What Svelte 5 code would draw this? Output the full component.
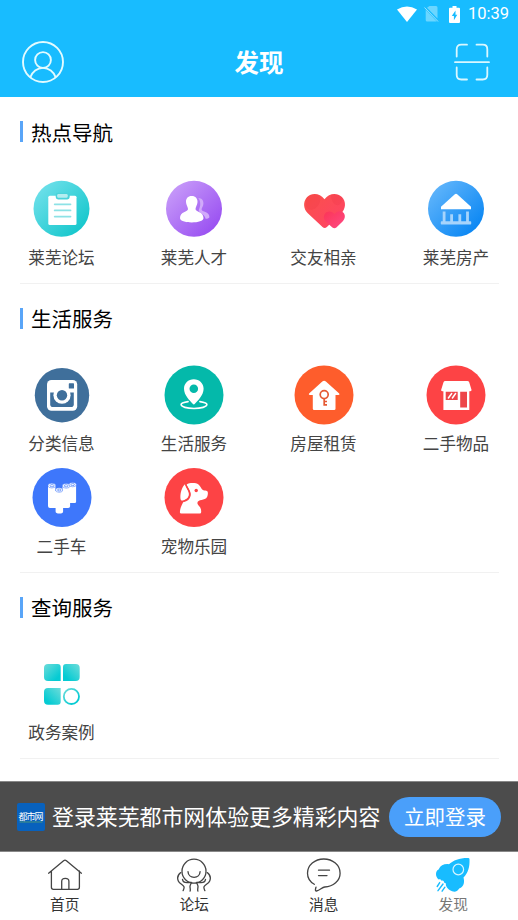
<script lang="ts">
  interface Item {
    icon: string;
    label: string;
  }

  interface Section {
    title: string;
    items: Item[];
  }

  const sections: Section[] = [
    {
      title: '热点导航',
      items: [
        { icon: 'clipboard', label: '莱芜论坛' },
        { icon: 'people', label: '莱芜人才' },
        { icon: 'heart', label: '交友相亲' },
        { icon: 'estate', label: '莱芜房产' }
      ]
    },
    {
      title: '生活服务',
      items: [
        { icon: 'camera', label: '分类信息' },
        { icon: 'pin', label: '生活服务' },
        { icon: 'rent', label: '房屋租赁' },
        { icon: 'shop', label: '二手物品' },
        { icon: 'rolls', label: '二手车' },
        { icon: 'dog', label: '宠物乐园' }
      ]
    },
    {
      title: '查询服务',
      items: [{ icon: 'blocks', label: '政务案例' }]
    }
  ];

  const tabs: Item[] = [
    { icon: 'home', label: '首页' },
    { icon: 'forum', label: '论坛' },
    { icon: 'message', label: '消息' },
    { icon: 'discover', label: '发现' }
  ];

  let active: string = $state('discover');
</script>

{#snippet serviceIcon(name: string)}
  <svg class="icon" viewBox="0 0 60 60" aria-hidden="true">
    {#if name === 'clipboard'}
      <defs>
        <linearGradient id="teal" x1="0" y1="0" x2="1" y2="1">
          <stop offset="0.1" stop-color="#6fe0ea" />
          <stop offset="0.9" stop-color="#12c6cb" />
        </linearGradient>
      </defs>
      <circle cx="29.5" cy="29.8" r="28" fill="url(#teal)" />
      <rect x="16.3" y="16.8" width="28.2" height="29.2" rx="1.5" fill="#fff" />
      <rect x="23.7" y="13.7" width="14" height="6.8" rx="2.4" fill="#4bd3da" />
      <rect x="25.2" y="15" width="10.5" height="3.8" rx="1.2" fill="#b5edf0" />
      <path d="M22.7 25.3h15.8M22.7 31.4h15.8M22.7 37.6h15.8" stroke="#8de2e6" stroke-width="1.8" stroke-linecap="round" />
    {:else if name === 'people'}
      <defs>
        <linearGradient id="purple" x1="0" y1="0" x2="1" y2="1">
          <stop offset="0.1" stop-color="#c79bf9" />
          <stop offset="0.9" stop-color="#984df1" />
        </linearGradient>
      </defs>
      <circle cx="30" cy="29.8" r="28" fill="url(#purple)" />
      <path d="M34.2 19c3.8.1 5.4 2.4 5.2 5.8-.1 2.3-1.8 4.1-1.8 5.8 0 2.3 7.8 2.2 7.8 7.3 0 1.2-1.6 1.7-3.8 1.9-.6-3.9-5.2-5.3-6.7-7.5-.8-1.3 1-3.2 1.3-6.1.2-2.9-.3-5.5-2-7.2z" fill="#d1aafa" />
      <path d="M27.7 17c3.9 0 6 2.6 5.8 6.1-.1 3-1.9 5-2 6.8-.1 2.9 8 2.4 8 9.2 0 3.1-5.4 4.4-11.8 4.4S16 42.2 16 39.1c0-6.8 8.1-6.3 8-9.2-.1-1.8-1.9-3.8-2-6.8-.2-3.5 1.8-6.1 5.7-6.1z" fill="#fff" />
    {:else if name === 'heart'}
      <defs>
        <linearGradient id="red" x1="0" y1="0" x2="1" y2="1">
          <stop offset="0" stop-color="#fa5149" />
          <stop offset="1" stop-color="#ff4268" />
        </linearGradient>
        <linearGradient id="pink" x1="0" y1="0" x2="1" y2="1">
          <stop offset="0" stop-color="#fb3556" />
          <stop offset="1" stop-color="#ff4a85" />
        </linearGradient>
      </defs>
      <path d="M30.5 20.2C26 14 17.8 13.4 13.2 18c-4.7 4.9-3.700 12 .6 16.300L28.500 48q2.200 2 4.400 0l14.400-13.800c4.500-4.400 5.200-11.600.5-16.200-4.800-4.600-12.700-4-17.300 2.200z" fill="url(#red)" />
      <path d="M12 20c1-3 6-5.700 11-4.300 5 1.600 3.800 9.500-1.300 13.400-4.600 3.400-8.500 1.100-9.700-2.100zM37 16c4-1.600 9-.5 11.700 3-.4 5-3.400 7.800-6.200 7-3.600-1-5.700-6.100-5.500-10z" fill="#ed3145" opacity=".22" />
      <path d="M40.500 35.200c-2.400-3.400-7.400-3.500-9.600-.4-1.800 2.700-1.200 5.700.8 7.700l6.700 6c1.300 1.100 2.700 1.100 4 0l6.400-6.300c2.200-2.100 2.800-5.800.9-8.200-2.300-2.800-7-2.300-9.200 1.200z" fill="url(#pink)" />
    {:else if name === 'estate'}
      <defs>
        <linearGradient id="blue" x1="0" y1="0" x2="1" y2="1">
          <stop offset="0.1" stop-color="#61b5fb" />
          <stop offset="0.9" stop-color="#0785f3" />
        </linearGradient>
      </defs>
      <circle cx="30" cy="29.8" r="28" fill="url(#blue)" />
      <path d="M28.8 15.3q1.200-1 2.400 0L45 27.700v2.500H15v-2.500z" fill="#fff" />
      <path d="M18.100 32.500v11M25.600 35.200v8M33.800 35.200v8M41.500 32.500v11" stroke="#a6d4fc" stroke-width="2.800" />
      <path d="M15.500 42.300h29q.7 0 .7.7v1.800q0 .7-.7.7h-29q-.7 0-.7-.7V43q0-.7.7-.7z" fill="#a6d4fc" />
    {:else if name === 'camera'}
      <circle cx="30" cy="30.2" r="27.2" fill="#3f6f9b" />
      <rect x="15" y="15" width="30.2" height="30.8" rx="4.5" fill="#fff" />
      <path d="M18.2 27.5h23.600v11.800q0 2.800-2.800 2.800H21q-2.800 0-2.800-2.800z" fill="#3f6f9b" />
      <circle cx="30" cy="30.2" r="8.6" fill="#fff" />
      <circle cx="30" cy="30.2" r="5.2" fill="#3f6f9b" />
      <rect x="36.8" y="18.3" width="5.2" height="5.2" rx=".6" fill="#3f6f9b" />
    {:else if name === 'pin'}
      <circle cx="30" cy="30" r="29.5" fill="#04b9aa" />
      <path d="M24.1 36.6c-4.2.6-7 1.7-7 3 0 2.2 5.8 3.9 12.9 3.9s12.9-1.7 12.9-3.9c0-1.3-2.8-2.4-7-3" fill="none" stroke="#fff" stroke-width="1.6" stroke-linecap="round" />
      <path fill-rule="evenodd" d="M29.8 14.2c-5.6 0-9.8 4.2-9.8 9.5 0 6.4 6 12.1 8.7 15.1q1.1 1.2 2.2 0c2.8-3 8.7-8.7 8.7-15.1 0-5.3-4.2-9.5-9.8-9.5zm0 5.2a4.3 4.3 0 1 1 0 8.6 4.3 4.3 0 0 1 0-8.6z" fill="#fff" />
    {:else if name === 'rent'}
      <circle cx="30" cy="30" r="29.5" fill="#fe5d2c" />
      <path d="M28.3 16.5q1.8-1.6 3.6 0l13.3 12q1 1.4-.7 1.4h-3v13.8q0 1.4-1.4 1.4H20.2q-1.4 0-1.4-1.4V29.9h-3q-1.6 0-.7-1.4z" fill="#fff" />
      <g fill="none" stroke="#e55a34" stroke-width="1.7">
        <circle cx="30.2" cy="29.6" r="4" />
        <path d="M30.2 33.6v7.2M30.2 36.5h2.8M30.2 39.8h2.8" />
      </g>
    {:else if name === 'shop'}
      <circle cx="30" cy="30" r="29.5" fill="#fd4345" />
      <path d="M19.3 16h22q1.4 0 1.9 1.3l2.3 7.5q.3 1.4-1.2 1.4h-1v18.9H17.4V26.2h-1.1q-1.6 0-1.1-1.4l2.3-7.5q.4-1.3 1.8-1.3z" fill="#fff" />
      <path d="M19.7 26.8h12V35h-12zM34.2 26.8h6.8v15.7h-6.8z" fill="#ed4549" />
      <path d="m22.4 33 3.3-4.5M26.4 33l3.2-4.5" stroke="#fff" stroke-width="1.5" stroke-linecap="round" />
    {:else if name === 'rolls'}
      <circle cx="30" cy="29.5" r="29.5" fill="#3e77fb" />
      <path d="M16 17.5h7.4V23h7.1v-4.5h7.2v-2h6.4v17.2q0 1.2-1.4 1.2h-4.6v3.4q0 1.8-2 1.8h-5v3.5q0 2-3.7 2t-3.8-2v-3.5H18q-2 0-2-2z" fill="#fff" />
      <g fill="#fff" stroke="#3e77fb" stroke-width=".5">
        <ellipse cx="19.8" cy="17.6" rx="3.8" ry="2.4" />
        <ellipse cx="27.2" cy="22" rx="3.6" ry="2.3" />
        <ellipse cx="34.2" cy="17.8" rx="3.8" ry="2.4" />
        <ellipse cx="40.7" cy="16.6" rx="3.6" ry="2.2" />
      </g>
      <g fill="none" stroke="#3e77fb" stroke-width=".7">
        <ellipse cx="20" cy="17.7" rx="2" ry="1.1" />
        <ellipse cx="27.3" cy="22" rx="1.8" ry="1" />
        <ellipse cx="34.2" cy="17.8" rx="1.9" ry="1.1" />
        <ellipse cx="40.7" cy="16.6" rx="1.8" ry="1" />
      </g>
    {:else if name === 'dog'}
      <circle cx="30" cy="29.5" r="29.5" fill="#fd4345" />
      <path d="M22.5 16.4c3.3-1.8 9.4-1.8 12 .1 2.2 1.6 2.6 4.5 4.4 5.5 1.6.8 3.2.3 4.4 1.2.9.8.7 3.8-.1 5.5-1 2.3-3.6 2.8-5.6 3.2-2.3.4-4.2 1-4.2 3.1 0 2.7 3.8 3 3.8 8.4v.6q0 1.5-1.5 1.5H17.3q-1.5 0-1.4-1.5c.2-4.2 1.9-7 3.5-10.2l2.5-1.2c3.8-1.7 5.3-5 4.2-8.4z" fill="#fff" />
      <path d="M21 16.2c-3.4 3.3-4.7 8.7-4.6 13.5 0 2.5 1.2 3.3 3 2.7 4.3-1.3 6.5-4.4 5-8.6-.9-2.7-2.6-4.6-3.4-7.6z" fill="#fff" />
      <path d="M21.8 16.3c.8 3.4 5 6.5 4.1 11.2-.6 3.1-3.3 5.1-6.7 5.9" fill="none" stroke="#fd4345" stroke-width="1.5" />
      <circle cx="32.2" cy="22.5" r="1.7" fill="#fd4345" />
    {:else if name === 'blocks'}
      <defs>
        <linearGradient id="cyanA" x1="0" y1="0" x2="1" y2="1">
          <stop offset="0" stop-color="#6ddcda" />
          <stop offset="0.8" stop-color="#05cbd3" />
        </linearGradient>
        <linearGradient id="cyanB" x1="1" y1="0" x2="0" y2="1">
          <stop offset="0" stop-color="#6ddcda" />
          <stop offset="0.8" stop-color="#05cbd3" />
        </linearGradient>
      </defs>
      <path d="M16 10h9.7q3 0 3 3v14H16q-4 0-4-4v-9q0-4 4-4z" fill="url(#cyanA)" />
      <path d="M34 10h9.7q4 0 4 4v9q0 4-4 4H31V13q0-3 3-3z" fill="url(#cyanB)" />
      <path d="M16 34h12.7v13.7q0 3-3 3H16q-4 0-4-4V38q0-4 4-4z" fill="url(#cyanB)" />
      <circle cx="39.4" cy="42.4" r="7.6" fill="none" stroke="url(#cyanA)" stroke-width="1.8" />
    {/if}
  </svg>
{/snippet}

{#snippet tabIcon(name: string)}
  <svg class="tab-icon" viewBox="0 0 36 36" aria-hidden="true">
    {#if name === 'home'}
      <path d="M1.6 16.2 16.6 3.7q1.4-1.1 2.8 0l15 12.5M4.4 14v16.3q0 2 2 2h24q2 0 2-2V14M14.7 32v-7.600q0-3 3.600-3t3.600 3V32" />
    {:else if name === 'forum'}
      <circle cx="18" cy="14.2" r="12" />
      <path d="M12 14.6c.2 3.5 2.8 5.8 6.1 5.8s5.8-2.3 6-5.8" />
      <path d="M4.8 15.6C2.2 17.6 1 21 2.3 24c1.2 2.7 4.7 3.7 5.7 5.8.4 1.2-.3 2.5-.9 3.9M6.5 22.4c.3 2.2 2.4 3.3 4.5 3.3 1.4 0 2.8-.6 4.3-.2-.2 1.5-1.1 2.2-1.3 3.8-.1 1.5.7 3 .1 4.8" />
      <path d="M31.2 15.6c2.6 2 3.8 5.4 2.5 8.4-1.2 2.7-4.7 3.7-5.7 5.8-.4 1.2.3 2.5.9 3.9M29.5 22.4c-.3 2.2-2.4 3.3-4.5 3.3-1.4 0-2.8-.6-4.3-.2.2 1.5 1.1 2.2 1.3 3.8.1 1.5-.7 3-.1 4.8" />
    {:else if name === 'message'}
      <path d="M8.3 27.3C4 24.8 1.5 21 1.5 16.2 1.5 8.2 8.8 2 17.8 2s16.300 6.200 16.300 14.200c0 7.600-6.800 13.400-15.400 13.800-2.700.2-4.700 3.400-8.200 4-1.700.2-1-2.100-.5-3.900" />
      <path d="M12.5 13.2h11M12.5 18.6h8.5" />
    {:else if name === 'discover'}
      <path class="solid" d="M33.2.9q1.300 0 1.300 1.300c.3 7.600-1.300 13.600-6 18.300 1.300 4.500.2 8.600-2.700 10.300-1 .6-1.600.4-2.200 1.500-1.700 3.100-5.800 2.800-8.600.9-2-1.300-3.600-3-4.200-5.200.6-1.500-.4-2.600-1.700-2.200 0-1.900-1.300-2.700-2.700-2-.4-1.700-1.600-2-2.700-1.300C1.300 20.600.2 17 1.700 14.200c.8-1.500 1.800-1 2.300-2.400 1.400-3.500 5.300-5.100 9.900-4.600C18.400 3 25 .7 33.200.9z" />
      <circle class="window" cx="23.3" cy="12.5" r="5.3" />
      <path class="flame" d="m4.700 25.600-2.500 3.900M8 27l-5 6.700M9.900 30.200l-2.800 4" />
    {/if}
  </svg>
{/snippet}

<div class="app">
  <header>
    <div class="status">
      <svg class="wifi" viewBox="0 0 20 16" aria-hidden="true">
        <path d="M0 3.500Q10-2.700 20 3.500L10 16z" fill="#fff" />
      </svg>
      <svg class="sim" viewBox="0 0 15 16" aria-hidden="true">
        <path d="M5.5 0H12q1.500 0 1.500 1.500v11L3 1.800zM1.700 3.800l11.100 11.700H3.200q-1.500 0-1.500-1.500z" fill="#6bd6ff" />
        <path d="m.5 1.500 13.500 14" stroke="#9be3ff" />
      </svg>
      <svg class="battery" viewBox="0 0 11 17" aria-hidden="true">
        <path d="M3.500 0h4v1.800H10q1 0 1 1V16q0 1-1 1H1q-1 0-1-1V2.800q0-1 1-1h2.500z" fill="#fff" />
        <path d="M6.500 4.500 2.800 10h2.100v4.300l3.400-5.600H6.500z" fill="#18bcff" />
      </svg>
      <span class="time">10:39</span>
    </div>
    <div class="navbar">
      <svg class="avatar" viewBox="0 0 42 42" fill="none" stroke="#e2fbff" stroke-width="1.9" aria-hidden="true">
        <circle cx="21" cy="21" r="20" />
        <circle cx="21" cy="19" r="7.9" />
        <path d="M8.2 36.500c2-5.600 7-9.600 12.800-9.600s10.800 4 12.800 9.600" />
      </svg>
      <h1>发现</h1>
      <svg class="scan" viewBox="0 0 36 38" fill="none" stroke="#d9f7ff" stroke-width="1.8" stroke-linecap="round" aria-hidden="true">
        <path d="M2.700 13.500V6.200q0-4.500 4.500-4.500H13M22.500 1.700h6.300q4.500 0 4.500 4.500v7.300M2.700 24.500V32q0 4.500 4.500 4.500H13M22.500 36.500h6.300q4.500 0 4.500-4.500v-7.500M1 19.200h34" />
      </svg>
    </div>
  </header>

  <main>
    {#each sections as section}
      <section>
        <h2>{section.title}</h2>
        <div class="grid">
          {#each section.items as item}
            <div class="item">
              {@render serviceIcon(item.icon)}
              <span>{item.label}</span>
            </div>
          {/each}
        </div>
      </section>
    {/each}
  </main>

  <div class="login">
    <svg class="logo" viewBox="0 0 28 28" aria-hidden="true">
      <rect width="28" height="28" rx="2" fill="#0861bd" />
      <text x="14" y="17" text-anchor="middle" textLength="25">都市网</text>
      <path d="M2.500 19h23" stroke="#5ba36f" stroke-width=".8" />
    </svg>
    <p>登录莱芜都市网体验更多精彩内容</p>
    <button>立即登录</button>
  </div>

  <nav>
    {#each tabs as tab}
      <button class="tab" class:active={active === tab.icon} onclick={() => (active = tab.icon)}>
        {@render tabIcon(tab.icon)}
        <span>{tab.label}</span>
      </button>
    {/each}
  </nav>
</div>

<style>
  :global(body) {
    background: #fff;
  }

  .app {
    display: flex;
    flex-direction: column;
    width: 518px;
    height: 920px;
    overflow: hidden;
    background: #fff;
    font-family: 'Noto Sans CJK SC', sans-serif;
  }

  h1,
  h2,
  p {
    margin: 0;
    font-weight: 400;
  }

  button {
    padding: 0;
    border: 0;
    font-family: inherit;
    cursor: pointer;
  }

  svg {
    display: block;
    flex: none;
  }

  header {
    flex: none;
    height: 97px;
    background: #18bcff;
    color: #fff;
  }

  .status {
    display: flex;
    align-items: center;
    justify-content: flex-end;
    height: 28px;
    padding-right: 9px;
  }

  .wifi {
    width: 20px;
    height: 16px;
    margin-right: 7px;
  }

  .sim {
    width: 15px;
    height: 16px;
    margin-right: 10px;
  }

  .battery {
    width: 11px;
    height: 17px;
    margin-right: 8px;
  }

  .time {
    font: 400 16.5px/28px Roboto, sans-serif;
  }

  .navbar {
    display: flex;
    align-items: center;
    justify-content: space-between;
    height: 68px;
    padding: 0 28px 0 22px;
  }

  .avatar {
    width: 42px;
    height: 42px;
  }

  .scan {
    width: 36px;
    height: 38px;
  }

  h1 {
    font-size: 24.5px;
    font-weight: 700;
    line-height: 36px;
  }

  main {
    flex: 1;
    min-height: 0;
    padding: 0 19px 0 20px;
  }

  section {
    padding-bottom: 12.5px;
    border-bottom: 1px solid #f1f1f1;
  }

  h2 {
    display: flex;
    align-items: center;
    gap: 8px;
    height: 69px;
    color: #000;
    font-size: 20.5px;
    line-height: 30px;
  }

  h2::before {
    content: '';
    width: 3px;
    height: 21px;
    background: #59a5f8;
  }

  .grid {
    display: grid;
    grid-template-columns: 132.5px 129.5px 132.5px 67px;
    row-gap: 12px;
    padding: 12.5px 0 0 8px;
  }

  .item {
    display: flex;
    flex-direction: column;
    align-items: center;
    gap: 7px;
    width: 67px;
    color: #444;
    font-size: 16.6px;
    line-height: 23.500px;
    white-space: nowrap;
  }

  .item:nth-last-child(1):nth-child(n) {
    margin-bottom: 1px;
  }

  .icon {
    width: 60px;
    height: 60px;
  }

  .login {
    display: flex;
    align-items: center;
    flex: none;
    box-sizing: border-box;
    height: 71px;
    padding: 0 17px;
    border-top: 1px solid #888;
    border-bottom: 1px solid #888;
    background: #4c4c4c;
    color: #fff;
  }

  .logo {
    width: 28px;
    height: 28px;
  }

  .logo text {
    fill: #fff;
    font-size: 9px;
  }

  .login p {
    flex: 1;
    margin-left: 7px;
    padding-bottom: 2px;
    font-size: 21.9px;
    line-height: 32px;
    white-space: nowrap;
  }

  .login button {
    flex: none;
    width: 112px;
    height: 40px;
    border-radius: 20px;
    background: #4a9ffa;
    color: #fff;
    font-size: 20.5px;
    line-height: 38px;
    padding-bottom: 2px;
  }

  nav {
    display: flex;
    flex: none;
    height: 68px;
  }

  .tab {
    display: flex;
    flex: 1;
    flex-direction: column;
    align-items: center;
    padding-top: 5px;
    background: none;
    color: #333;
    font-size: 14.7px;
    line-height: 22px;
  }

  .tab.active {
    color: #777;
  }

  .tab-icon {
    width: 36px;
    height: 36px;
    fill: none;
    stroke: #444;
    stroke-width: 1.3;
    stroke-linecap: round;
    stroke-linejoin: round;
  }

  .tab-icon .solid {
    fill: #18bcff;
    stroke: none;
  }

  .tab-icon .window {
    stroke: #d5f4ff;
    stroke-width: 1.2;
  }

  .tab-icon .flame {
    stroke: #18bcff;
    stroke-width: 1.4;
  }
</style>
